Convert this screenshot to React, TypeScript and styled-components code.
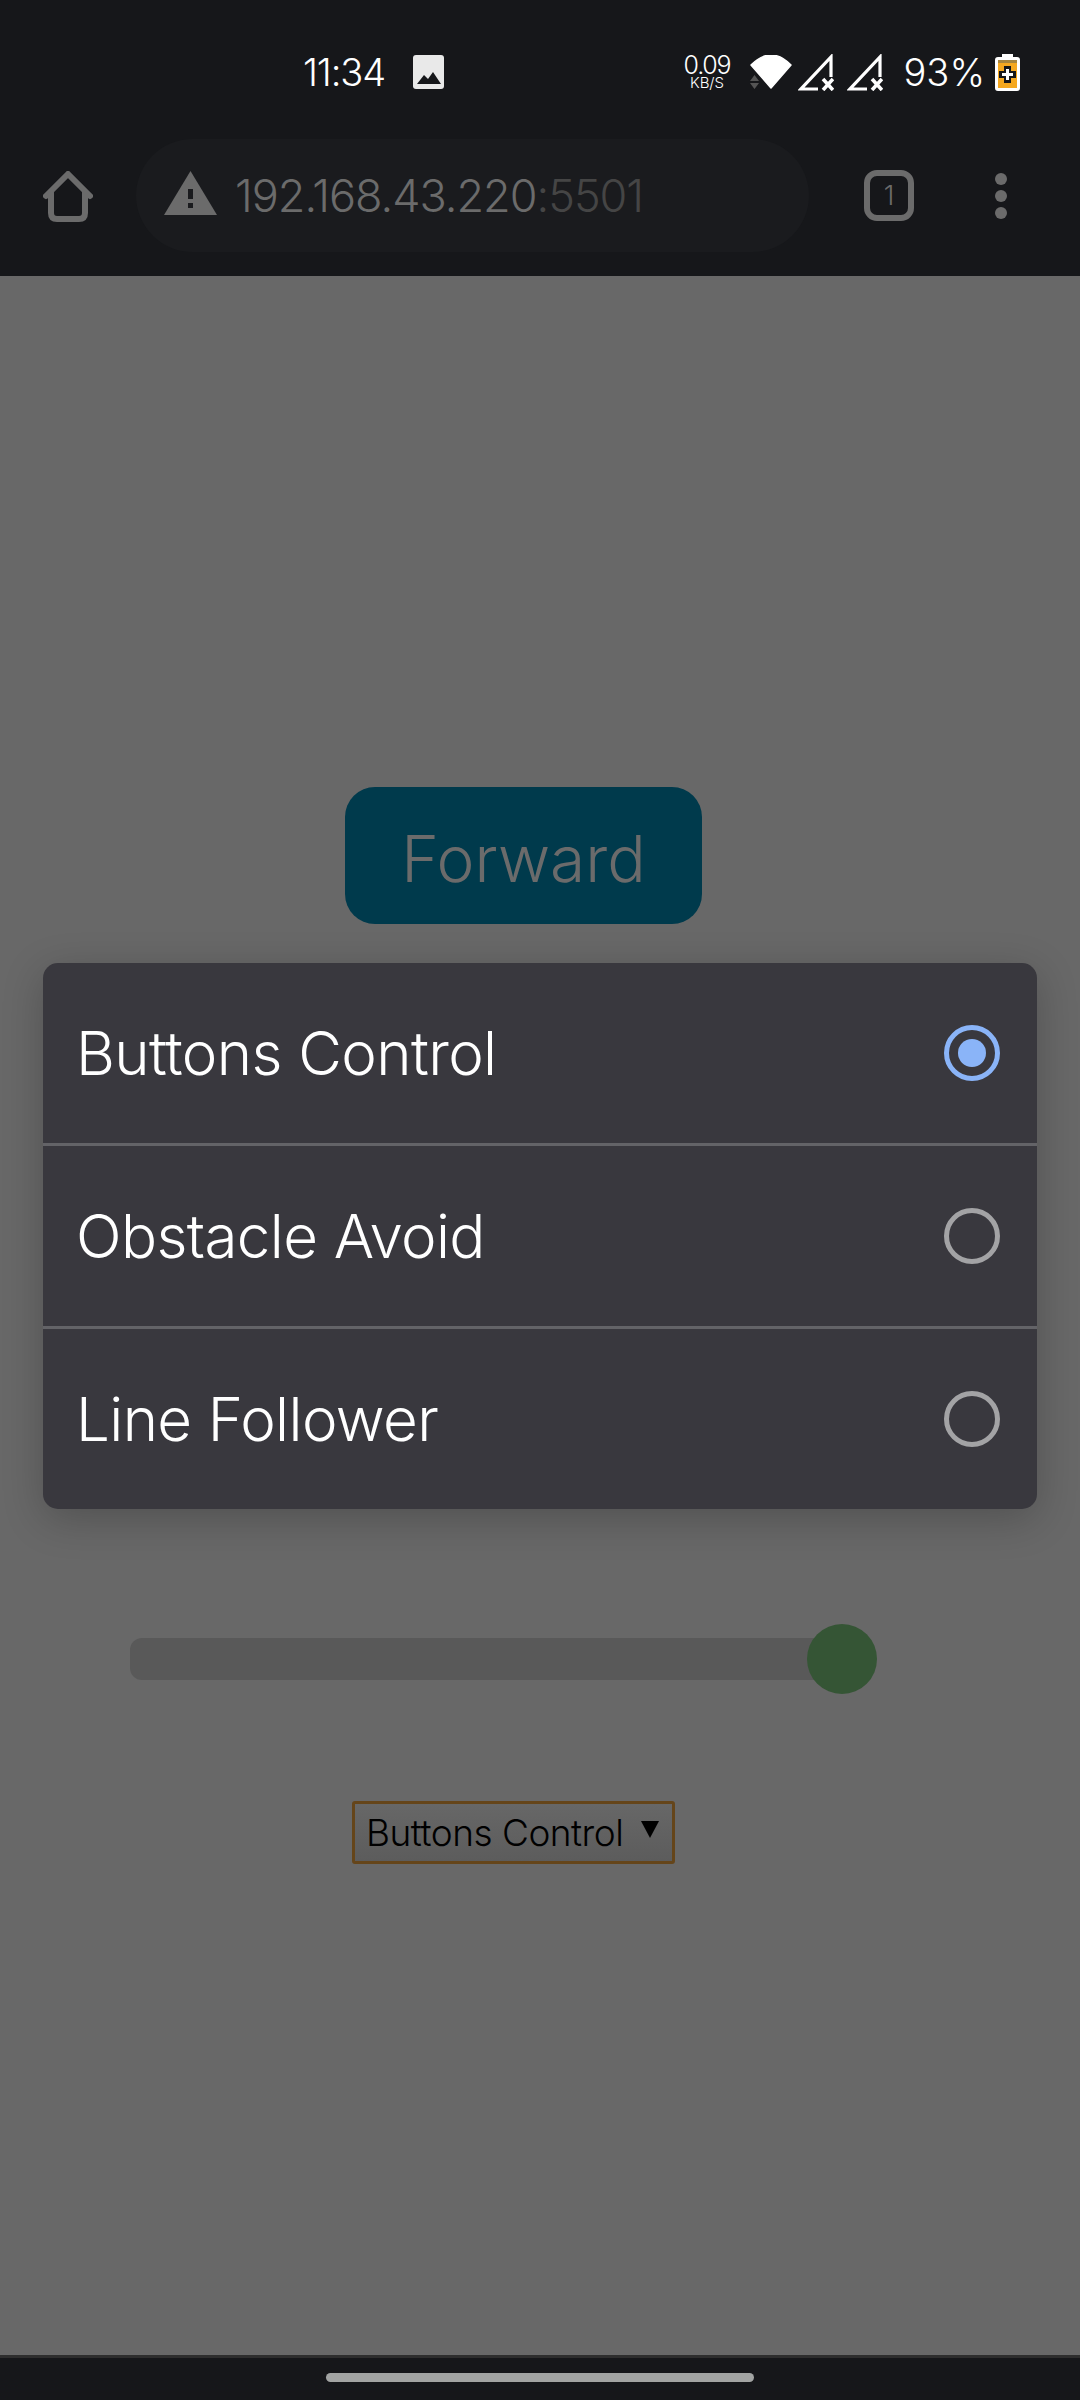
import React from "react";
import styled, { createGlobalStyle } from "styled-components";

const Global = createGlobalStyle`
  html, body { margin: 0; padding: 0; background: #686868; }
  * { box-sizing: border-box; }
`;
const FONT = `Inter, "Liberation Sans", Arial, sans-serif`;

const Screen = styled.div`
  width: 1080px; height: 2400px; display: flex; flex-direction: column; position: relative;
  overflow: hidden; background: #686868; font-family: ${FONT}; font-weight: 300;
`;
const Chrome = styled.header`
  height: 276px; background: #16171a; display: flex; flex-direction: column; flex: none;
`;
const StatusBar = styled.div`
  height: 144px; margin-bottom: -4px; display: flex; align-items: center; padding: 0 60px 0 303px; color: #fff; flex: none;
`;
const Clock = styled.span`
  font-size: 38px; letter-spacing: -1.1px; line-height: 1; width: 110px;
`;
const StatusRight = styled.div`
  margin-left: auto; display: flex; align-items: center; gap: 6px;
`;
const Speed = styled.div`
  display: flex; flex-direction: column; align-items: center; font-size: 25px; line-height: 22px; letter-spacing: -1.2px; width: 47px; margin-right: 13px;
  small { font-size: 15px; line-height: 14px; letter-spacing: 0; }
`;
const Percent = styled.span`
  font-size: 38px; letter-spacing: 0; margin: 0 4px 0 9px; line-height: 1;
`;
const AddressRow = styled.div`
  flex: 1; display: flex; align-items: flex-start;
`;
const HomeSlot = styled.div`
  width: 136px; padding: 31px 0 0 43px;
`;
const Omnibox = styled.div`
  width: 673px; height: 113px; border-radius: 57px; background: #1a1b1e; display: flex; align-items: center; padding-left: 28px; margin-top: -1px;
`;
const Url = styled.span`
  font-size: 45px; letter-spacing: -1px; color: #6b6b6b; margin-left: 18px; line-height: 1;
  em { font-style: normal; color: #454545; }
`;
const TabSlot = styled.div`
  width: 50px; height: 51px; margin-left: 55px; margin-top: 30px; border: 6px solid #6b6b6b; border-radius: 13px;
  display: flex; align-items: center; justify-content: center; color: #6b6b6b; font-size: 27px;
`;
const MenuSlot = styled.div`
  margin-left: 81px; margin-top: 33px; display: flex; flex-direction: column; gap: 5px;
`;
const Dot = styled.span`
  width: 12px; height: 12px; border-radius: 50%; background: #6b6b6b; display: block;
`;
const Page = styled.main`
  flex: 1; display: flex; flex-direction: column; align-items: flex-start; padding-top: 511px;
`;
const ForwardButton = styled.div`
  width: 357px; height: 137px; margin-left: 345px; padding-top: 5px; border-radius: 30px; background: #003a4c; color: #6b6b6b;
  font-size: 64px; display: flex; align-items: center; justify-content: center;
`;
const Slider = styled.div`
  margin: 700px 0 0 130px; height: 70px; display: flex; align-items: center;
`;
const Track = styled.div`
  width: 712px; height: 42px; border-radius: 12px; background: #595959;
`;
const Thumb = styled.div`
  width: 70px; height: 70px; border-radius: 50%; background: #355535; margin-left: -35px;
`;
const SelectBox = styled.div`
  margin: 107px 0 0 352px; width: 323px; height: 63px; border: 3px solid #65451a; border-radius: 3px;
  background: linear-gradient(#676767, #5c5c5c); color: #000; display: flex; align-items: center; padding-left: 11px; font-size: 37px; letter-spacing: -0.5px;
  white-space: nowrap;
`;
const Caret = styled.span`
  width: 0; height: 0; margin-left: auto; margin-right: 13px; margin-top: -6px;
  border-left: 9px solid transparent; border-right: 9px solid transparent; border-top: 17px solid #000;
`;
const NavBar = styled.footer`
  height: 45px; flex: none; background: #16171a; border-top: 3px solid #2e2e2e; display: flex; justify-content: center; padding-top: 15px;
`;
const HomeBar = styled.div`
  width: 428px; height: 9px; border-radius: 5px; background: #a2a4a3;
`;
const Dialog = styled.section`
  position: absolute; left: 43px; top: 963px; width: 994px; height: 546px; border-radius: 15px; background: #39383e;
  box-shadow: 0 10px 40px rgba(0,0,0,.22); display: flex; flex-direction: column;
`;
const Option = styled.div<{ $line: boolean }>`
  flex: 1; display: flex; align-items: center; justify-content: space-between; padding: 0 37px 0 33px;
  color: #fff; font-size: 60px; letter-spacing: -0.6px;
  border-bottom: ${(p) => (p.$line ? "3px solid #636367" : "none")};
`;
const Radio = styled.span<{ $on: boolean }>`
  width: 56px; height: 56px; border-radius: 50%; display: flex; align-items: center; justify-content: center;
  border: 5px solid ${(p) => (p.$on ? "#8ab4f8" : "#a3a3a5")};
  &::after { content: ""; width: 28px; height: 28px; border-radius: 50%; background: ${(p) => (p.$on ? "#8ab4f8" : "transparent")}; }
`;
const PicSvg = styled.svg`
  flex: none;
`;

const PicIcon = () => (
  <PicSvg width="31" height="34" viewBox="0 0 31 34">
    <rect width="31" height="34" rx="3" fill="#e9e9e9" />
    <path d="M4 29 L11 20 L15 24 L20 17 L28 29 Z" fill="#16171a" />
  </PicSvg>
);
const WifiIcon = () => (
  <svg width="42" height="34" viewBox="0 0 42 34">
    <path d="M1 10 Q21 -10 41 10 L21 33 Z" fill="#fff" stroke="#fff" strokeWidth="1.5" strokeLinejoin="round" />
    <path d="M4.5 20 L9 26 H0 Z M4.5 34 L9 28 H0 Z" fill="#555" />
  </svg>
);
const SignalIcon = () => (
  <svg width="36" height="37" viewBox="0 0 36 37">
    <path d="M33 23 V3 L3 35 H20" fill="none" stroke="#fff" strokeWidth="3.2" />
    <path d="M25 25 L35 36 M35 25 L25 36" fill="none" stroke="#fff" strokeWidth="3.6" />
  </svg>
);
const SignalGroup = styled.div`
  display: flex; gap: 13px; margin-right: 6px;
`;
const BatteryIcon = () => (
  <svg width="25" height="37" viewBox="0 0 25 37">
    <path d="M7 0 H18 V3 H22 Q25 3 25 6 V34 Q25 37 22 37 H3 Q0 37 0 34 V6 Q0 3 3 3 H7 Z" fill="#fff" />
    <rect x="3" y="9" width="19" height="25" fill="#f5a820" />
    <rect x="3" y="6" width="19" height="3" fill="#a8863e" />
    <path d="M9 12 H16 V17 H21 V24 H16 V29 H9 V24 H4 V17 H9 Z" fill="#16171a" />
    <path d="M11 15 H14 V19 H18 V22 H14 V26 H11 V22 H7 V19 H11 Z" fill="#fff" />
  </svg>
);
const HomeIcon = () => (
  <svg width="50" height="51" viewBox="0 0 50 51">
    <path d="M3 25 L25 3 L47 25 M8 21 V42 Q8 48 14 48 H36 Q42 48 42 42 V21" fill="none" stroke="#6b6b6b" strokeWidth="6" strokeLinecap="round" strokeLinejoin="round" />
  </svg>
);
const WarnSvg = styled.svg`
  margin-bottom: 5px; flex: none;
`;
const WarnIcon = () => (
  <WarnSvg width="53" height="44" viewBox="0 0 53 44">
    <path d="M26.5 0 L53 44 H0 Z" fill="#6b6b6b" />
    <rect x="24" y="18" width="5" height="10" fill="#1a1b1e" />
    <rect x="24" y="32" width="5" height="5" fill="#1a1b1e" />
  </WarnSvg>
);

const options = ["Buttons Control", "Obstacle Avoid", "Line Follower"];

export default function App() {
  return (
    <Screen>
      <Global />
      <Chrome>
        <StatusBar>
          <Clock>11:34</Clock>
          <PicIcon />
          <StatusRight>
            <Speed>0.09<small>KB/S</small></Speed>
            <WifiIcon />
            <SignalGroup>
              <SignalIcon />
              <SignalIcon />
            </SignalGroup>
            <Percent>93%</Percent>
            <BatteryIcon />
          </StatusRight>
        </StatusBar>
        <AddressRow>
          <HomeSlot><HomeIcon /></HomeSlot>
          <Omnibox>
            <WarnIcon />
            <Url>192.168.43.220<em>:5501</em></Url>
          </Omnibox>
          <TabSlot>1</TabSlot>
          <MenuSlot><Dot /><Dot /><Dot /></MenuSlot>
        </AddressRow>
      </Chrome>
      <Page>
        <ForwardButton>Forward</ForwardButton>
        <Slider><Track /><Thumb /></Slider>
        <SelectBox>Buttons Control<Caret /></SelectBox>
      </Page>
      <NavBar><HomeBar /></NavBar>
      <Dialog>
        {options.map((o, i) => (
          <Option key={o} $line={i < 2}>
            {o}
            <Radio $on={i === 0} />
          </Option>
        ))}
      </Dialog>
    </Screen>
  );
}
